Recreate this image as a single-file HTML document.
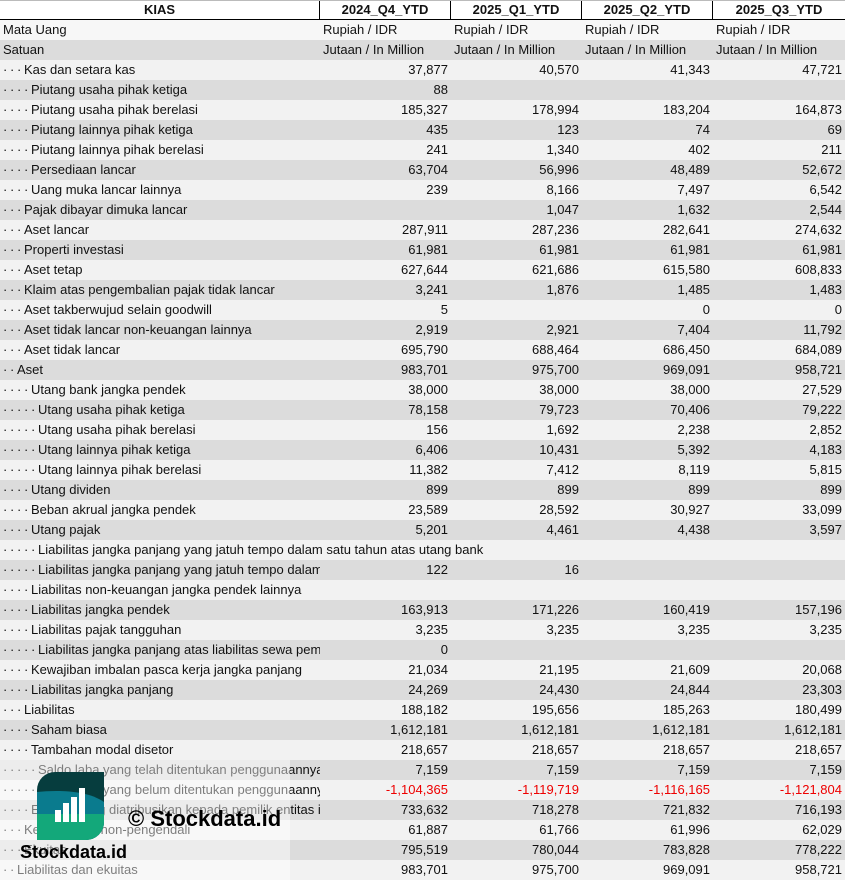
<!DOCTYPE html>
<html><head><meta charset="utf-8"><style>
*{margin:0;padding:0;box-sizing:border-box}
body{width:845px;height:881px;overflow:hidden;background:#fff;font-family:"Liberation Sans",Arial,sans-serif;font-size:13px;color:#111}
.r{position:absolute;left:0;width:845px;height:20px;line-height:20px;white-space:nowrap}
.c{position:absolute;top:0;height:20px}
.l{left:0;width:320px;overflow:hidden;padding-left:3px}
.l.o{overflow:visible}
.v{text-align:right;padding-right:3px}
.v1{left:320px;width:131px}.v2{left:451px;width:131px}.v3{left:582px;width:131px}.v4{left:713px;width:132px}
.t{left:320px;width:131px;padding-left:3px}
.d{display:inline-block;width:7px;text-align:left}
.neg{color:#e00}
.h{top:0;font-weight:bold;text-align:center;border-top:1px solid #bbb;border-bottom:2px solid #000;height:21px;line-height:18px}
.h .c{border-right:1px solid #000;height:19px}
</style></head><body>
<div class="r h" style="top:0">
<div class="c" style="left:0;width:320px">KIAS</div>
<div class="c" style="left:320px;width:131px">2024_Q4_YTD</div>
<div class="c" style="left:451px;width:131px">2025_Q1_YTD</div>
<div class="c" style="left:582px;width:131px">2025_Q2_YTD</div>
<div class="c" style="left:713px;width:132px;border-right:none">2025_Q3_YTD</div>
</div>
<div id="rows"></div>
<div style="position:absolute;left:0;top:760px;width:290px;height:121px;background:rgba(255,255,255,0.45)"></div>
<svg style="position:absolute;left:37px;top:772px" width="67" height="68" viewBox="0 0 67 68">
<defs><clipPath id="cp"><path d="M18 0H67V50A18 18 0 0 1 49 68H0V18A18 18 0 0 1 18 0Z"/></clipPath></defs>
<g clip-path="url(#cp)">
<rect width="67" height="68" fill="#063d3e"/>
<path d="M0 20C20 18 50 18 67 30V68H0Z" fill="#0a7b8e"/>
<path d="M0 42H67V68H0Z" fill="#13a87a"/>
</g>
<rect x="18" y="38" width="6" height="12" fill="#fff"/>
<rect x="26" y="31" width="6" height="19" fill="#fff"/>
<rect x="34" y="25" width="6" height="25" fill="#fff"/>
<rect x="42" y="16" width="6" height="34" fill="#fff"/>
</svg>
<div style="position:absolute;left:128px;top:806px;font-size:22px;font-weight:bold;color:#000;line-height:26px">© Stockdata.id</div>
<div style="position:absolute;left:20px;top:841px;font-size:18px;font-weight:bold;color:#000;line-height:22px">Stockdata.id</div>
<script>
var D=[
["Kas dan setara kas",3,["37,877","40,570","41,343","47,721"]],
["Piutang usaha pihak ketiga",4,["88","","",""]],
["Piutang usaha pihak berelasi",4,["185,327","178,994","183,204","164,873"]],
["Piutang lainnya pihak ketiga",4,["435","123","74","69"]],
["Piutang lainnya pihak berelasi",4,["241","1,340","402","211"]],
["Persediaan lancar",4,["63,704","56,996","48,489","52,672"]],
["Uang muka lancar lainnya",4,["239","8,166","7,497","6,542"]],
["Pajak dibayar dimuka lancar",3,["","1,047","1,632","2,544"]],
["Aset lancar",3,["287,911","287,236","282,641","274,632"]],
["Properti investasi",3,["61,981","61,981","61,981","61,981"]],
["Aset tetap",3,["627,644","621,686","615,580","608,833"]],
["Klaim atas pengembalian pajak tidak lancar",3,["3,241","1,876","1,485","1,483"]],
["Aset takberwujud selain goodwill",3,["5","","0","0"]],
["Aset tidak lancar non-keuangan lainnya",3,["2,919","2,921","7,404","11,792"]],
["Aset tidak lancar",3,["695,790","688,464","686,450","684,089"]],
["Aset",2,["983,701","975,700","969,091","958,721"]],
["Utang bank jangka pendek",4,["38,000","38,000","38,000","27,529"]],
["Utang usaha pihak ketiga",5,["78,158","79,723","70,406","79,222"]],
["Utang usaha pihak berelasi",5,["156","1,692","2,238","2,852"]],
["Utang lainnya pihak ketiga",5,["6,406","10,431","5,392","4,183"]],
["Utang lainnya pihak berelasi",5,["11,382","7,412","8,119","5,815"]],
["Utang dividen",4,["899","899","899","899"]],
["Beban akrual jangka pendek",4,["23,589","28,592","30,927","33,099"]],
["Utang pajak",4,["5,201","4,461","4,438","3,597"]],
["Liabilitas jangka panjang yang jatuh tempo dalam satu tahun atas utang bank",5,["","","",""]],
["Liabilitas jangka panjang yang jatuh tempo dalam satu tahun",5,["122","16","",""]],
["Liabilitas non-keuangan jangka pendek lainnya",4,["","","",""]],
["Liabilitas jangka pendek",4,["163,913","171,226","160,419","157,196"]],
["Liabilitas pajak tangguhan",4,["3,235","3,235","3,235","3,235"]],
["Liabilitas jangka panjang atas liabilitas sewa pembiayaan",5,["0","","",""]],
["Kewajiban imbalan pasca kerja jangka panjang",4,["21,034","21,195","21,609","20,068"]],
["Liabilitas jangka panjang",4,["24,269","24,430","24,844","23,303"]],
["Liabilitas",3,["188,182","195,656","185,263","180,499"]],
["Saham biasa",4,["1,612,181","1,612,181","1,612,181","1,612,181"]],
["Tambahan modal disetor",4,["218,657","218,657","218,657","218,657"]],
["Saldo laba yang telah ditentukan penggunaannya",5,["7,159","7,159","7,159","7,159"]],
["Saldo laba yang belum ditentukan penggunaannya",5,["-1,104,365","-1,119,719","-1,116,165","-1,121,804"]],
["Ekuitas yang diatribusikan kepada pemilik entitas induk",4,["733,632","718,278","721,832","716,193"]],
["Kepentingan non-pengendali",3,["61,887","61,766","61,996","62,029"]],
["Ekuitas",3,["795,519","780,044","783,828","778,222"]],
["Liabilitas dan ekuitas",2,["983,701","975,700","969,091","958,721"]]
];
var h='';
h+='<div class="r" style="top:20px;background:#f7f7f7"><div class="c l">Mata Uang</div>';
for(var i=0;i<4;i++){var L=[320,451,582,713][i];h+='<div class="c" style="left:'+L+'px;padding-left:3px">Rupiah / IDR</div>';}
h+='</div><div class="r" style="top:40px;background:#dcdcdc"><div class="c l">Satuan</div>';
for(var i=0;i<4;i++){var L=[320,451,582,713][i];h+='<div class="c" style="left:'+L+'px;padding-left:3px">Jutaan / In Million</div>';}
h+='</div>';
D.forEach(function(r,k){
var bg=k%2==0?'#f2f2f2':'#dcdcdc';
var empty=r[2].join('')=='';
var dots='';for(var j=0;j<r[1];j++)dots+='<span class="d">·</span>';
h+='<div class="r" style="top:'+(60+k*20)+'px;background:'+bg+'"><div class="c l'+(empty?' o':'')+'">'+dots+r[0]+'</div>';
r[2].forEach(function(v,i){h+='<div class="c v v'+(i+1)+(v.charAt(0)=='-'?' neg':'')+'" style="background:'+bg+'">'+v+'</div>';});
if(empty)h=h.replace(/<div class="c v v\d" style="background:[^"]*"><\/div>/g,'');
h+='</div>';
});
document.getElementById('rows').innerHTML=h;
</script>
</body></html>
